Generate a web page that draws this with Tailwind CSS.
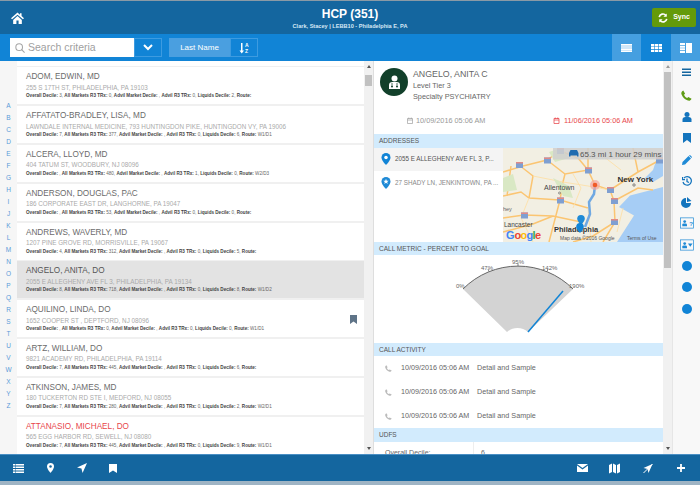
<!DOCTYPE html>
<html lang="en">
<head>
    <meta charset="UTF-8">
    <title>HCP</title>
    <script src="https://cdn.jsdelivr.net/npm/@tailwindcss/browser@4"></script>
</head>
<body class="w-[700px] h-[485px] overflow-hidden bg-white font-['Liberation_Sans',sans-serif]">
    <div class="flex flex-col h-[485px]">
        <div class="h-px bg-[#8a9aa6]"></div>
        <!-- header -->
        <div class="h-[33px] bg-[#14669f] flex items-center pl-[11px] pr-[4px]">
            <div class="w-[60px]">
                <svg class="w-[13px] h-[12px]" viewBox="0 0 24 22" fill="#fff"><path d="M12 1 L0 11.5 L2 13.5 L12 4.8 L22 13.5 L24 11.5 L19.5 7.5 V2 H16.5 V4.8 Z M4 14.5 V22 H10 V15.500 H14 V22 H20 V14.5 L12 7.5 Z"/></svg>
            </div>
            <div class="flex-1 text-center text-white pr-[7px]">
                <div class="text-[12px] leading-[14px] font-bold mt-[2px]">HCP (351)</div>
                <div class="text-[5.6px] leading-[9px] mt-[1px] font-bold text-[#d6e8f5]">Clark, Stacey | LEBB10 - Philadelphia E, PA</div>
            </div>
            <div class="w-[60px] flex justify-end">
                <div class="w-[44px] h-[19px] bg-[#649a0a] rounded-[2px] flex items-center justify-center gap-[5px] text-white text-[7px] font-bold">
                    <svg class="w-[10px] h-[10px]" viewBox="0 0 24 24" fill="none" stroke="#fff" stroke-width="4"><path d="M3 10 A9 9 0 0 1 19 6 M21 14 A9 9 0 0 1 5 18"/><path d="M21 1 V9 H13 Z M3 23 V15 H11 Z" fill="#fff" stroke="none"/></svg>
                    <span>Sync</span>
                </div>
            </div>
        </div>
        <!-- toolbar -->
        <div class="h-[27px] bg-[#1184d6] flex items-center pl-[10px]">
            <div class="w-[124px] h-[19px] bg-white flex items-center pl-[5px] gap-[3px] text-[10.5px] text-[#a0a0a0]">
                <svg class="w-[10px] h-[10px]" viewBox="0 0 24 24" fill="none" stroke="#a5a5a5" stroke-width="2.5"><circle cx="10" cy="10" r="8"/><path d="M16 16 L23 23"/></svg>
                <span>Search criteria</span>
            </div>
            <div class="w-[28px] h-[19px] border border-[#3d9be0] flex items-center justify-center">
                <svg class="w-[10px] h-[7px]" viewBox="0 0 20 14" fill="none" stroke="#fff" stroke-width="4"><path d="M2 2 L10 10 L18 2"/></svg>
            </div>
            <div class="ml-[7px] w-[61px] h-[19px] bg-[#4a9fe0] flex items-center justify-center text-[8px] text-white">Last Name</div>
            <div class="w-[28px] h-[19px] border border-[#3d9be0] flex items-center justify-center text-white">
                <svg class="w-[10px] h-[12px]" viewBox="0 0 20 24" fill="#fff"><path d="M4 2 H7 V17 H10 L5.5 23 L1 17 H4 Z"/><text x="12" y="10" font-size="10" font-weight="700" font-family="Liberation Sans">A</text><text x="12" y="22" font-size="10" font-weight="700" font-family="Liberation Sans">Z</text></svg>
            </div>
            <div class="ml-auto flex h-[27px]">
                <div class="w-[29px] bg-[#459fe0] flex items-center justify-center">
                    <svg class="w-[11px] h-[8px]" viewBox="0 0 22 16" fill="#fff"><path d="M0 0 H22 V3.4 H0 Z M0 4.3 H22 V7.6 H0 Z M0 8.5 H22 V11.8 H0 Z M0 12.7 H22 V16 H0 Z"/></svg>
                </div>
                <div class="w-[30px] flex items-center justify-center">
                    <svg class="w-[11px] h-[8px]" viewBox="0 0 22 16" fill="#fff"><path d="M0 0 H6.5 V4.5 H0 Z M7.7 0 H14.2 V4.5 H7.7 Z M15.5 0 H22 V4.5 H15.5 Z M0 5.7 H6.5 V10.2 H0 Z M7.7 5.7 H14.2 V10.2 H7.7 Z M15.5 5.7 H22 V10.2 H15.5 Z M0 11.5 H6.5 V16 H0 Z M7.7 11.5 H14.2 V16 H7.7 Z M15.5 11.5 H22 V16 H15.5 Z"/></svg>
                </div>
                <div class="w-[29px] bg-[#459fe0] flex items-center justify-center">
                    <svg class="w-[12px] h-[10px]" viewBox="0 0 24 20" fill="#fff"><path d="M0 0 H10 V4 H0 Z M0 5.3 H10 V9.3 H0 Z M0 10.6 H10 V14.6 H0 Z M0 16 H10 V20 H0 Z M12 0 H24 V20 H12 Z"/></svg>
                </div>
            </div>
        </div>
        <!-- middle -->
        <div class="h-[393px] flex overflow-hidden bg-[#f6f6f6]">
            <!-- alphabet -->
            <div class="w-[17px] flex flex-col items-center pt-[39px] text-[6.5px] leading-[12px] text-[#5b9bd8]">
                <span>A</span><span>B</span><span>C</span><span>D</span><span>E</span><span>F</span><span>G</span><span>H</span><span>I</span><span>J</span><span>K</span><span>L</span><span>M</span><span>N</span><span>O</span><span>P</span><span>Q</span><span>R</span><span>S</span><span>T</span><span>U</span><span>V</span><span>W</span><span>X</span><span>Y</span><span>Z</span>
            </div>
            <!-- list -->
            <div class="w-[347px] overflow-hidden bg-[#f0f0f0] flex flex-col gap-[1.8px]">
                <div class="h-[4.6px] shrink-0 bg-white"></div>
                <div class="h-[37px] shrink-0 bg-white pl-[9px] pt-[5px]">
                    <div class="text-[8.2px] leading-[10px] text-[#6b6b6b]">ADOM, EDWIN, MD</div>
                    <div class="text-[6.3px] leading-[9px] mt-[.5px] text-[#aaa]">255 S 17TH ST, PHILADELPHIA, PA 19103</div>
                    <div class="text-[4.6px] leading-[8px] mt-[.5px] text-[#666]"><b class="text-[#444]">Overall Decile:</b> 3, <b class="text-[#444]">All Markets R3 TRx:</b> 0, <b class="text-[#444]">Advil Market Decile:</b> , <b class="text-[#444]">Advil R3 TRx:</b> 0, <b class="text-[#444]">Liquids Decile:</b> 2, <b class="text-[#444]">Route:</b></div>
                </div>
                <div class="h-[37px] shrink-0 bg-white pl-[9px] pt-[5px]">
                    <div class="text-[8.2px] leading-[10px] text-[#6b6b6b]">AFFATATO-BRADLEY, LISA, MD</div>
                    <div class="text-[6.3px] leading-[9px] mt-[.5px] text-[#aaa]">LAWNDALE INTERNAL MEDICINE, 793 HUNTINGDON PIKE, HUNTINGDON VY, PA 19006</div>
                    <div class="text-[4.6px] leading-[8px] mt-[.5px] text-[#666]"><b class="text-[#444]">Overall Decile:</b> 7, <b class="text-[#444]">All Markets R3 TRx:</b> 377, <b class="text-[#444]">Advil Market Decile:</b> , <b class="text-[#444]">Advil R3 TRx:</b> 0, <b class="text-[#444]">Liquids Decile:</b> 6, <b class="text-[#444]">Route:</b> W1/D1</div>
                </div>
                <div class="h-[37px] shrink-0 bg-white pl-[9px] pt-[5px]">
                    <div class="text-[8.2px] leading-[10px] text-[#6b6b6b]">ALCERA, LLOYD, MD</div>
                    <div class="text-[6.3px] leading-[9px] mt-[.5px] text-[#aaa]">404 TATUM ST, WOODBURY, NJ 08096</div>
                    <div class="text-[4.6px] leading-[8px] mt-[.5px] text-[#666]"><b class="text-[#444]">Overall Decile:</b> , <b class="text-[#444]">All Markets R3 TRx:</b> 480, <b class="text-[#444]">Advil Market Decile:</b> , <b class="text-[#444]">Advil R3 TRx:</b> 1, <b class="text-[#444]">Liquids Decile:</b> 0, <b class="text-[#444]">Route:</b> W2/D3</div>
                </div>
                <div class="h-[37px] shrink-0 bg-white pl-[9px] pt-[5px]">
                    <div class="text-[8.2px] leading-[10px] text-[#6b6b6b]">ANDERSON, DOUGLAS, PAC</div>
                    <div class="text-[6.3px] leading-[9px] mt-[.5px] text-[#aaa]">186 CORPORATE EAST DR, LANGHORNE, PA 19047</div>
                    <div class="text-[4.6px] leading-[8px] mt-[.5px] text-[#666]"><b class="text-[#444]">Overall Decile:</b> , <b class="text-[#444]">All Markets R3 TRx:</b> 53, <b class="text-[#444]">Advil Market Decile:</b> , <b class="text-[#444]">Advil R3 TRx:</b> 0, <b class="text-[#444]">Liquids Decile:</b> 0, <b class="text-[#444]">Route:</b></div>
                </div>
                <div class="h-[37px] shrink-0 bg-white pl-[9px] pt-[5px]">
                    <div class="text-[8.2px] leading-[10px] text-[#6b6b6b]">ANDREWS, WAVERLY, MD</div>
                    <div class="text-[6.3px] leading-[9px] mt-[.5px] text-[#aaa]">1207 PINE GROVE RD, MORRISVILLE, PA 19067</div>
                    <div class="text-[4.6px] leading-[8px] mt-[.5px] text-[#666]"><b class="text-[#444]">Overall Decile:</b> 4, <b class="text-[#444]">All Markets R3 TRx:</b> 312, <b class="text-[#444]">Advil Market Decile:</b> , <b class="text-[#444]">Advil R3 TRx:</b> 0, <b class="text-[#444]">Liquids Decile:</b> 5, <b class="text-[#444]">Route:</b></div>
                </div>
                <div class="h-[37px] shrink-0 bg-[#e3e3e3] pl-[9px] pt-[5px]">
                    <div class="text-[8.2px] leading-[10px] text-[#555]">ANGELO, ANITA, DO</div>
                    <div class="text-[6.3px] leading-[9px] mt-[.5px] text-[#aaa]">2055 E ALLEGHENY AVE FL 3, PHILADELPHIA, PA 19134</div>
                    <div class="text-[4.6px] leading-[8px] mt-[.5px] text-[#666]"><b class="text-[#444]">Overall Decile:</b> 8, <b class="text-[#444]">All Markets R3 TRx:</b> 718, <b class="text-[#444]">Advil Market Decile:</b> , <b class="text-[#444]">Advil R3 TRx:</b> 0, <b class="text-[#444]">Liquids Decile:</b> 8, <b class="text-[#444]">Route:</b> W1/D2</div>
                </div>
                <div class="h-[37px] shrink-0 bg-white pl-[9px] pt-[5px] flex items-center justify-between pr-[7px]">
                    <div class="self-start">
                        <div class="text-[8.2px] leading-[10px] text-[#6b6b6b]">AQUILINO, LINDA, DO</div>
                        <div class="text-[6.3px] leading-[9px] mt-[.5px] text-[#aaa]">1652 COOPER ST , DEPTFORD, NJ 08096</div>
                        <div class="text-[4.6px] leading-[8px] mt-[.5px] text-[#666]"><b class="text-[#444]">Overall Decile:</b> , <b class="text-[#444]">All Markets R3 TRx:</b> 0, <b class="text-[#444]">Advil Market Decile:</b> , <b class="text-[#444]">Advil R3 TRx:</b> 0, <b class="text-[#444]">Liquids Decile:</b> 0, <b class="text-[#444]">Route:</b> W1/D1</div>
                    </div>
                    <svg class="w-[7px] h-[9px] -mt-[4px]" viewBox="0 0 14 18" fill="#5f7488"><path d="M0 0 H14 V18 L7 13 L0 18 Z"/></svg>
                </div>
                <div class="h-[37px] shrink-0 bg-white pl-[9px] pt-[5px]">
                    <div class="text-[8.2px] leading-[10px] text-[#6b6b6b]">ARTZ, WILLIAM, DO</div>
                    <div class="text-[6.3px] leading-[9px] mt-[.5px] text-[#aaa]">9821 ACADEMY RD, PHILADELPHIA, PA 19114</div>
                    <div class="text-[4.6px] leading-[8px] mt-[.5px] text-[#666]"><b class="text-[#444]">Overall Decile:</b> 7, <b class="text-[#444]">All Markets R3 TRx:</b> 445, <b class="text-[#444]">Advil Market Decile:</b> , <b class="text-[#444]">Advil R3 TRx:</b> 0, <b class="text-[#444]">Liquids Decile:</b> 6, <b class="text-[#444]">Route:</b></div>
                </div>
                <div class="h-[37px] shrink-0 bg-white pl-[9px] pt-[5px]">
                    <div class="text-[8.2px] leading-[10px] text-[#6b6b6b]">ATKINSON, JAMES, MD</div>
                    <div class="text-[6.3px] leading-[9px] mt-[.5px] text-[#aaa]">180 TUCKERTON RD STE I, MEDFORD, NJ 08055</div>
                    <div class="text-[4.6px] leading-[8px] mt-[.5px] text-[#666]"><b class="text-[#444]">Overall Decile:</b> 7, <b class="text-[#444]">All Markets R3 TRx:</b> 280, <b class="text-[#444]">Advil Market Decile:</b> , <b class="text-[#444]">Advil R3 TRx:</b> 0, <b class="text-[#444]">Liquids Decile:</b> 2, <b class="text-[#444]">Route:</b> W2/D1</div>
                </div>
                <div class="h-[37px] shrink-0 bg-white pl-[9px] pt-[5px]">
                    <div class="text-[8.2px] leading-[10px] text-[#e8474c]">ATTANASIO, MICHAEL, DO</div>
                    <div class="text-[6.3px] leading-[9px] mt-[.5px] text-[#aaa]">565 EGG HARBOR RD, SEWELL, NJ 08080</div>
                    <div class="text-[4.6px] leading-[8px] mt-[.5px] text-[#666]"><b class="text-[#444]">Overall Decile:</b> 7, <b class="text-[#444]">All Markets R3 TRx:</b> 445, <b class="text-[#444]">Advil Market Decile:</b> , <b class="text-[#444]">Advil R3 TRx:</b> 0, <b class="text-[#444]">Liquids Decile:</b> 9, <b class="text-[#444]">Route:</b> W1/D1</div>
                </div>
            </div>
            <!-- list scrollbar -->
            <div class="w-[9px] bg-[#f1f1f1] flex flex-col items-center pt-[4px]">
                <div class="w-0 h-0 border-x-[2.5px] border-x-transparent border-b-[3px] border-b-[#555]"></div>
                <div class="w-[7px] h-[11px] mt-[7px] bg-[#c1c1c1]"></div>
                <div class="mt-auto mb-[4px] w-0 h-0 border-x-[2.5px] border-x-transparent border-t-[3px] border-t-[#555]"></div>
            </div>
            <div class="w-[1px] bg-[#dedede]"></div>
            <!-- detail -->
            <div class="w-[289px] overflow-hidden bg-white">
                <div class="h-[73px] pl-[6px] pt-[7px]">
                    <div class="flex">
                        <div class="w-[28px] h-[28px] rounded-full bg-[#12402a] flex items-center justify-center">
                            <svg class="w-[13px] h-[14px]" viewBox="0 0 26 28" fill="#fff"><circle cx="13" cy="7" r="6"/><path d="M2 28 V20 Q2 14 9 14 H17 Q24 14 24 20 V28 Z"/><path d="M8 16 V21 M18 16 V21" stroke="#12402a" stroke-width="1.5"/><circle cx="8" cy="23" r="2" fill="#12402a"/><circle cx="18" cy="23" r="2" fill="#12402a"/></svg>
                        </div>
                        <div class="ml-[5px]">
                            <div class="text-[8.8px] leading-[12px] text-[#666]">ANGELO, ANITA C</div>
                            <div class="text-[7.3px] leading-[11px] text-[#666]">Level Tier 3</div>
                            <div class="text-[7.3px] leading-[11px] text-[#666]">Specialty PSYCHIATRY</div>
                        </div>
                    </div>
                    <div class="flex mt-[14px] pl-[27px] text-[7.3px] leading-[9px]">
                        <div class="flex items-center gap-[3px] text-[#999] w-[146px]">
                            <svg class="w-[6px] h-[7px]" viewBox="0 0 12 14" fill="none" stroke="#999" stroke-width="1.3"><path d="M1 3 H11 V13 H1 Z M1 6 H11 M3.5 1 V4 M8.5 1 V4"/></svg>
                            <span>10/09/2016 05:06 AM</span>
                        </div>
                        <div class="flex items-center gap-[4px] text-[#e8474c]">
                            <svg class="w-[7px] h-[7px]" viewBox="0 0 12 14" fill="none" stroke="#e8474c" stroke-width="1.5"><path d="M1 3 H11 V13 H1 Z M1 6 H11 M3.5 1 V4 M8.5 1 V4"/></svg>
                            <span>11/06/2016 05:06 AM</span>
                        </div>
                    </div>
                </div>
                <div class="h-[13.5px] bg-[#d2ebfd] pl-[5px] text-[6.5px] leading-[13.5px] text-[#555]">ADDRESSES</div>
                <div class="flex h-[94px]">
                    <div class="w-[129px] text-[6.3px]">
                        <div class="h-[23px] bg-[#f4f4f4] flex items-center pl-[7px] gap-[4px] text-[#555]">
                            <svg class="w-[10px] h-[12px]" viewBox="0 0 18 24" fill="#1184d6"><path d="M9 0 A9 9 0 0 1 18 9 C18 15 9 24 9 24 C9 24 0 15 0 9 A9 9 0 0 1 9 0 Z"/><circle cx="9" cy="9" r="3.5" fill="#fff"/></svg>
                            <span>2055 E ALLEGHENY AVE FL 3, P...</span>
                        </div>
                        <div class="h-[24px] flex items-center pl-[7px] gap-[4px] text-[#888]">
                            <svg class="w-[10px] h-[12px]" viewBox="0 0 18 24" fill="#1f8ad6"><path d="M9 0 A9 9 0 0 1 18 9 C18 15 9 24 9 24 C9 24 0 15 0 9 A9 9 0 0 1 9 0 Z"/><path d="M9 3.5 L10.5 7.5 L14.5 7.5 L11.3 10 L12.5 14 L9 11.7 L5.5 14 L6.7 10 L3.5 7.5 L7.5 7.5 Z" fill="#fff"/></svg>
                            <span>27 SHADY LN, JENKINTOWN, PA ...</span>
                        </div>
                    </div>
                    <svg class="w-[160px] h-[94px]" viewBox="0 0 160 94" font-family="Liberation Sans">
                        <rect width="160" height="94" fill="#f2efe3"/>
                        <path d="M160 39 L127 47.5 L116 59 L131 67.5 L114 94 H160 Z" fill="#a6cdf5"/>
                        <path d="M142 30 L150 22 L154 10 L160 4 V28 L150 34 Z" fill="#a6cdf5"/>
                        <path d="M16 17 L30 28 L26 50 M0 48 L18 44 L26 50 L57 52 L85 60 M57 3 L44 12 L20 18 L0 24 M44 12 L62 26 L85 22 L92 37 L107 42 L111 53 L112 74 L100 94 M0 70 L21 67 L50 68 L78 74 M85 0 L85 22 L92 37 M57 3 L75 10 L85 22 M157 12 L135 24 L107 42 M111 53 L135 40 L150 42 M46 94 L57 52 L60 34 L62 26 M0 84 L30 76 L50 68 M112 74 L90 88 L70 94 M8 18 L4 48 M130 0 L135 24" fill="none" stroke="#fbc572" stroke-width="1.5"/>
                        <path d="M30 28 L60 34 L85 38 L107 42 M26 50 L18 70 L30 94 M70 60 L78 40 L70 26 M100 8 L118 22 M85 60 L88 94 M120 60 L114 84" fill="none" stroke="#fde0a8" stroke-width=".9"/>
                        <path d="M50 30 L66 38 L70 50 L60 48 Z M46 4 L58 0 L66 10 L52 14 Z M0 30 L10 26 L14 42 L0 44 Z" fill="#d9e8c4"/>
                        <g fill="#7f9fd1">
                            <rect x="13" y="14" width="7" height="6"/><rect x="41" y="9.500" width="7" height="6"/><rect x="54" y="0" width="7" height="6"/><rect x="82" y="19.500" width="7" height="6"/><rect x="104" y="39" width="7" height="6"/><rect x="108" y="50" width="7" height="6"/><rect x="54" y="49.500" width="7" height="6"/><rect x="18" y="64.500" width="7" height="6"/><rect x="108" y="71" width="7" height="6"/><rect x="153" y="9.500" width="7" height="6"/>
                        </g>
                        <g fill="#e08a86">
                            <rect x="13" y="14" width="7" height="1.500"/><rect x="41" y="9.500" width="7" height="1.500"/><rect x="54" y="0" width="7" height="1.500"/><rect x="82" y="19.500" width="7" height="1.500"/><rect x="104" y="39" width="7" height="1.500"/><rect x="108" y="50" width="7" height="1.500"/><rect x="54" y="49.500" width="7" height="1.500"/><rect x="18" y="64.500" width="7" height="1.500"/><rect x="108" y="71" width="7" height="1.500"/><rect x="153" y="9.500" width="7" height="1.500"/>
                        </g>
                        <path d="M92 37.500 L91 46 L86 54 L87 66 L82 79" fill="none" stroke="#6fa8e2" stroke-width="2.5"/>
                        <rect x="50" y="0" width="110" height="11.500" fill="#cfcfcf" fill-opacity=".85"/>
                        <path d="M66 8.500 V5 L67.5 2 H74 L75.500 5 V8.500 H74 V7.500 H67.5 V8.500 Z" fill="#1f6bb0"/>
                        <text x="77" y="8.500" font-size="8" fill="#555">65.3 mi 1 hour 29 mins</text>
                        <text x="41" y="42" font-size="7" fill="#444">Allentown</text>
                        <circle cx="56.500" cy="45" r="1" fill="none" stroke="#555" stroke-width=".6"/>
                        <text x="114.500" y="34" font-size="8" font-weight="700" fill="#333">New York</text>
                        <circle cx="131" cy="37" r="1.200" fill="none" stroke="#555" stroke-width=".7"/>
                        <text x="0" y="63" font-size="5.5" fill="#666">hey</text>
                        <text x="1" y="79" font-size="6.500" fill="#444">Lancaster</text>
                        <text x="51" y="84" font-size="7.500" font-weight="700" fill="#333">Philadelphia</text>
                        <circle cx="92" cy="37" r="5" fill="#f4a6a0" fill-opacity=".7"/><circle cx="92" cy="37" r="2.300" fill="#f05a28"/>
                        <path d="M78 67 a3.800 3.800 0 0 1 3.800 3.800 c0 2.500 -3.800 6.200 -3.800 6.200 c0 0 -3.800 -3.700 -3.800 -6.200 a3.800 3.800 0 0 1 3.800 -3.800 Z" fill="#1f8ad6"/>
                        <path d="M77 75 a3.800 3.800 0 0 1 3.800 3.800 c0 2.500 -3.800 6.200 -3.800 6.200 c0 0 -3.800 -3.700 -3.800 -6.200 a3.800 3.800 0 0 1 3.800 -3.800 Z" fill="#1184d6"/>
                        <g font-size="11" font-weight="700"><text x="3" y="91" fill="#4285f4">G</text><text x="11.500" y="91" fill="#ea4335">o</text><text x="17.500" y="91" fill="#fbbc05">o</text><text x="23.500" y="91" fill="#4285f4">g</text><text x="29.500" y="91" fill="#34a853">l</text><text x="32" y="91" fill="#ea4335">e</text></g>
                        <text x="57" y="92" font-size="5" fill="#555">Map data ©2016 Google</text>
                        <text x="124" y="92" font-size="5" fill="#555">Terms of Use</text>
                    </svg>
                </div>
                <div class="h-[13.5px] bg-[#d2ebfd] pl-[5px] text-[6.5px] leading-[13.5px] text-[#555]">CALL METRIC - PERCENT TO GOAL</div>
                <svg class="block w-[289px] h-[87.5px]" viewBox="0 0 289 87.5" font-family="Liberation Sans">
                    <path d="M89 34 A77.500 77.500 0 0 1 199 34 L154 77 A15.800 15.800 0 0 0 133 77 Z" fill="#d3d3d3"/>
                    <path d="M89 34 A77.500 77.500 0 0 1 199 34" fill="none" stroke="#666" stroke-width="1"/>
                    <path d="M115 16.600 L114 14 M144 11 V8.500 M173 16.600 L174 14" stroke="#666" stroke-width=".8"/>
                    <path d="M154 77 L189 36" stroke="#1184d6" stroke-width="1.500"/>
                    <g font-size="6" fill="#666"><text x="82" y="33">0%</text><text x="107" y="15">47%</text><text x="138" y="9">95%</text><text x="168" y="15">142%</text><text x="195" y="33">190%</text></g>
                </svg>
                <div class="h-[13.5px] bg-[#d2ebfd] pl-[5px] text-[6.5px] leading-[13.5px] text-[#555]">CALL ACTIVITY</div>
                <div class="h-[72px] text-[7.2px] text-[#666]">
                    <div class="h-[24px] flex items-center pl-[11px]">
                        <svg class="w-[7px] h-[7px] text-[#bbb]" viewBox="0 0 24 24" fill="currentColor"><path d="M5 1 L9 8 L6.500 10.500 C8 14 10 16 13.500 17.500 L16 15 L23 19 C21 23 18 24 15 23 C8 20 4 16 1 9 C0 6 1 3 5 1 Z"/></svg>
                        <span class="ml-[9px] w-[76px]">10/09/2016 05:06 AM</span>
                        <span>Detail and Sample</span>
                    </div>
                    <div class="h-[24px] flex items-center pl-[11px]">
                        <svg class="w-[7px] h-[7px] text-[#bbb]" viewBox="0 0 24 24" fill="currentColor"><path d="M5 1 L9 8 L6.500 10.500 C8 14 10 16 13.500 17.500 L16 15 L23 19 C21 23 18 24 15 23 C8 20 4 16 1 9 C0 6 1 3 5 1 Z"/></svg>
                        <span class="ml-[9px] w-[76px]">10/09/2016 05:06 AM</span>
                        <span>Detail and Sample</span>
                    </div>
                    <div class="h-[24px] flex items-center pl-[11px]">
                        <svg class="w-[7px] h-[7px] text-[#bbb]" viewBox="0 0 24 24" fill="currentColor"><path d="M5 1 L9 8 L6.500 10.500 C8 14 10 16 13.500 17.500 L16 15 L23 19 C21 23 18 24 15 23 C8 20 4 16 1 9 C0 6 1 3 5 1 Z"/></svg>
                        <span class="ml-[9px] w-[76px]">10/09/2016 05:06 AM</span>
                        <span>Detail and Sample</span>
                    </div>
                </div>
                <div class="h-[13.5px] bg-[#d2ebfd] pl-[5px] text-[6.5px] leading-[13.5px] text-[#555]">UDFS</div>
                <div class="flex text-[7px] leading-[9px] text-[#666]">
                    <span class="w-[100px] pl-[11px] pt-[6px] pb-[6px] border-r border-[#eee]">Overall Decile:</span>
                    <span class="pl-[7px] pt-[6px]">6</span>
                </div>
            </div>
            <!-- detail scrollbar -->
            <div class="w-[9px] bg-[#f1f1f1] flex flex-col items-center pt-[4px]">
                <div class="w-0 h-0 border-x-[2.5px] border-x-transparent border-b-[3px] border-b-[#999]"></div>
                <div class="w-[7px] h-[196px] mt-[4px] bg-[#c1c1c1]"></div>
                <div class="mt-auto mb-[4px] w-0 h-0 border-x-[2.5px] border-x-transparent border-t-[3px] border-t-[#555]"></div>
            </div>
            <!-- side icons -->
            <div class="w-[28px] bg-[#f8f8f8] border-l border-[#e6e6e6] flex flex-col items-center [&>div]:h-[21.3px] [&>div]:flex [&>div]:items-center">
                <div class="!h-[24px] pb-[2px]"><svg class="w-[9px] h-[9px]" viewBox="0 0 18 18" fill="#14669f"><path d="M0 1 H18 V4 H0 Z M0 7 H18 V10 H0 Z M0 13 H18 V16 H0 Z"/></svg></div>
                <div><svg class="w-[11px] h-[11px]" viewBox="0 0 24 24" fill="#5f9c16"><path d="M5 1 L9 8 L6.500 10.500 C8 14 10 16 13.500 17.500 L16 15 L23 19 C21 23 18 24 15 23 C8 20 4 16 1 9 C0 6 1 3 5 1 Z"/></svg></div>
                <div><svg class="w-[10px] h-[10px]" viewBox="0 0 20 20" fill="#1374bd"><circle cx="10" cy="5" r="5"/><path d="M1 20 V15 Q1 10 7 10 H13 Q19 10 19 15 V20 Z"/></svg></div>
                <div><svg class="w-[8px] h-[10px]" viewBox="0 0 16 20" fill="#1374bd"><path d="M0 0 H16 V20 L8 14 L0 20 Z"/></svg></div>
                <div><svg class="w-[10px] h-[10px]" viewBox="0 0 20 20" fill="#1f8ad6"><path d="M0 20 L1 14 L13 2 L18 7 L6 19 Z M14 1 L16 0 L20 4 L19 6 Z"/></svg></div>
                <div><svg class="w-[10px] h-[10px]" viewBox="0 0 20 20" fill="none" stroke="#1374bd" stroke-width="2.5"><path d="M4 4 A8.500 8.500 0 1 1 2 12 M1 2 V7 H6 M10 5 V11 L14 13"/></svg></div>
                <div><svg class="w-[11px] h-[11px]" viewBox="0 0 22 22" fill="#1374bd"><path d="M10 2 V12 H20 A10 10 0 1 1 10 2 Z M12 0 L21 8 L12 10 Z"/></svg></div>
                <div><svg class="w-[14px] h-[12px]" viewBox="0 0 30 24" font-family="Liberation Sans"><rect x="1" y="1" width="28" height="22" fill="none" stroke="#1f8ad6" stroke-width="1.500"/><circle cx="10" cy="9" r="3" fill="#1f8ad6"/><path d="M5 19 V15 Q5 13 8 13 H12 Q15 13 15 15 V19 Z" fill="#1f8ad6"/><text x="20" y="18" font-size="13" font-weight="700" fill="#1f8ad6">?</text></svg></div>
                <div><svg class="w-[14px] h-[12px]" viewBox="0 0 30 24"><rect x="1" y="1" width="28" height="22" fill="none" stroke="#1f8ad6" stroke-width="1.500"/><circle cx="10" cy="9" r="3" fill="#1f8ad6"/><path d="M5 19 V15 Q5 13 8 13 H12 Q15 13 15 15 V19 Z" fill="#1f8ad6"/><path d="M17 9 H27 L22 16 Z" fill="#1f8ad6"/></svg></div>
                <div><span class="block w-[10px] h-[10px] rounded-full bg-[#1184d6]"></span></div>
                <div><span class="block w-[10px] h-[10px] rounded-full bg-[#1184d6]"></span></div>
                <div><span class="block w-[10px] h-[10px] rounded-full bg-[#1184d6]"></span></div>
            </div>
        </div>
        <!-- footer -->
        <div class="h-[27px] bg-[#14669f] flex items-center pl-[13px] pr-[15px] border-t border-[#4a8fc4]">
            <svg class="w-[11px] h-[9px]" viewBox="0 0 22 18" fill="#fff"><path d="M0 0 H4 V3 H0 Z M5 0 H22 V3 H5 Z M0 5 H4 V8 H0 Z M5 5 H22 V8 H5 Z M0 10 H4 V13 H0 Z M5 10 H22 V13 H5 Z M0 15 H4 V18 H0 Z M5 15 H22 V18 H5 Z"/></svg>
            <svg class="ml-[22.5px] w-[7px] h-[10px]" viewBox="0 0 14 20"><path d="M7 0 A7 7 0 0 1 14 7 C14 12 7 20 7 20 C7 20 0 12 0 7 A7 7 0 0 1 7 0 Z" fill="#fff"/><circle cx="7" cy="7" r="2.500" fill="#14669f"/></svg>
            <svg class="ml-[23px] w-[10px] h-[10px]" viewBox="0 0 18 18" fill="#fff"><path d="M18 0 L10 18 L8 10 L0 8 Z"/></svg>
            <svg class="ml-[22.5px] w-[8px] h-[9px]" viewBox="0 0 16 18" fill="#fff"><path d="M0 0 H16 V18 L8 13 L0 18 Z"/></svg>
            <svg class="ml-auto w-[11px] h-[8px]" viewBox="0 0 22 16" fill="#fff"><path d="M0 0 H22 L11 8 Z M0 3 V16 H22 V3 L11 11 Z"/></svg>
            <svg class="ml-[21px] w-[11px] h-[11px]" viewBox="0 0 22 22" fill="#fff"><path d="M0 4 L6 1 V18 L0 21 Z M8 1 L14 4 V21 L8 18 Z M16 4 L22 1 V18 L16 21 Z"/></svg>
            <svg class="ml-[22px] w-[12px] h-[11px]" viewBox="0 0 22 22" fill="#fff"><path d="M20 2 L12 20 L10 12 L2 10 Z"/><path d="M2 20 L20 2" stroke="#fff" stroke-width="2"/></svg>
            <svg class="ml-[23px] w-[8px] h-[8px]" viewBox="0 0 18 18" fill="#fff"><path d="M7 0 H11 V7 H18 V11 H11 V18 H7 V11 H0 V7 H7 Z"/></svg>
        </div>
        <div class="flex-1 bg-[#9fb4c4]"></div>
    </div>
</body>
</html>
